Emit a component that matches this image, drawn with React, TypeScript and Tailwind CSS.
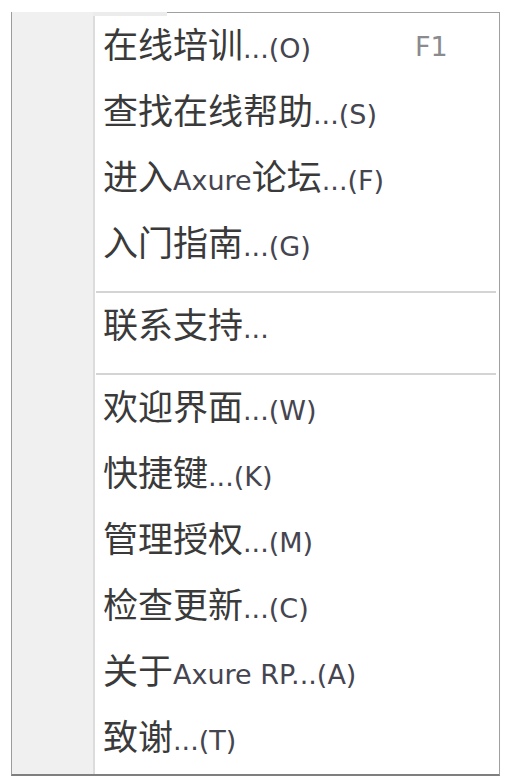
import React from "react";

type Item = { label: string; shortcut?: string } | "sep";

const items: Item[] = [
  { label: "在线培训...(O)", shortcut: "F1" },
  { label: "查找在线帮助...(S)" },
  { label: "进入Axure论坛...(F)" },
  { label: "入门指南...(G)" },
  "sep",
  { label: "联系支持..." },
  "sep",
  { label: "欢迎界面...(W)" },
  { label: "快捷键...(K)" },
  { label: "管理授权...(M)" },
  { label: "检查更新...(C)" },
  { label: "关于Axure RP...(A)" },
  { label: "致谢...(T)" },
];

// split label into CJK runs and latin runs, they get different sizes
const Label = ({ text }: { text: string }) => {
  const parts = text.split(/([\u4e00-\u9fff]+)/).filter((p) => p.length > 0);
  return (
    <span className="whitespace-pre">
      {parts.map((p, i) =>
        /[\u4e00-\u9fff]/.test(p) ? (
          <span key={i} className="text-[35px] text-[#3a3a3a]">
            {p}
          </span>
        ) : (
          <span key={i} className="text-[27px] text-[#454550]">
            {p}
          </span>
        )
      )}
    </span>
  );
};

const App = () => {
  return (
    <div
      className="min-h-screen bg-white pl-[11px] pt-[12px]"
      style={{ fontFamily: '"DejaVu Sans", "Noto Sans CJK SC", sans-serif' }}
    >
      <div className="flex h-[764px] w-[489px] border-l border-r border-b-2 border-l-[#9c9c9c] border-r-[#a0a0a0] border-b-[#7f7f7f] bg-white">
        <div className="w-[81px] bg-[#f0f0f0]" />
        <div className="flex flex-1 flex-col">
          <div className="flex h-[4px]">
            <div className="w-[74px] bg-[#ececec]" />
            <div className="flex-1 border-t border-[#a0a0a0]" />
          </div>
          <div className="flex flex-1">
            <div className="w-[2px] bg-[#dcdcdc]" />
            <div className="flex flex-1 flex-col">
              {items.map((item, i) =>
                item === "sep" ? (
                  <div key={i} className="h-[16px] pt-[11px] pl-[1px] pr-[3px]">
                    <div className="h-[2px] bg-[#d4d4d4]" />
                  </div>
                ) : (
                  <div key={i} className="flex h-[66px] items-center pb-[5px] pl-[8px] leading-none">
                    <div className="w-[312px]">
                      <Label text={item.label} />
                    </div>
                    {item.shortcut && (
                      <span className="text-[27px] text-[#8a8a8f]">{item.shortcut}</span>
                    )}
                  </div>
                )
              )}
            </div>
          </div>
        </div>
      </div>
    </div>
  );
};

export default App;
